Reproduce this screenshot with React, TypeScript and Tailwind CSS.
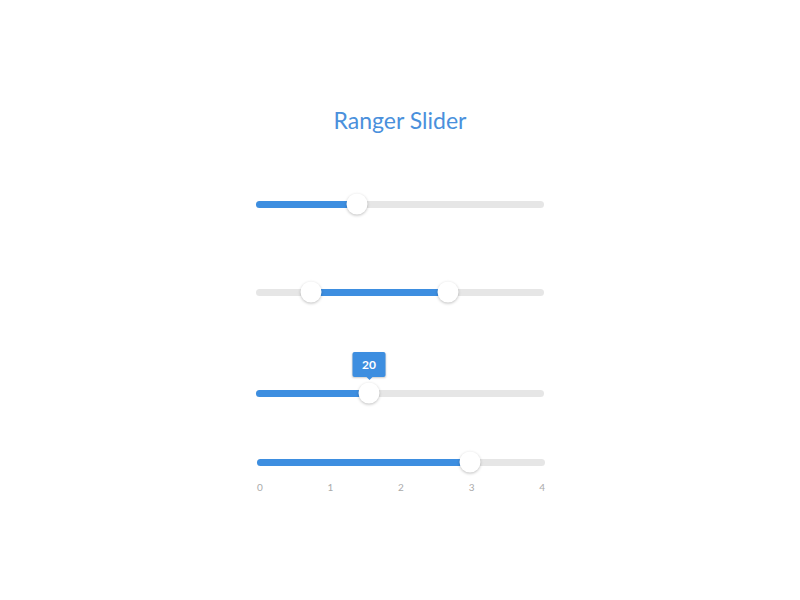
import React from "react";

const BLUE = "bg-[#3d8ee0]";

function Thumb({ left }: { left: number }) {
  return (
    <div
      className="absolute top-1/2 w-[21px] h-[21px] -translate-x-1/2 -translate-y-1/2 rounded-full bg-white shadow-[0_1px_3px_rgba(0,0,0,0.25)]"
      style={{ left: `${left}px` }}
    />
  );
}

function Slider({
  from,
  to,
  thumbs,
  children,
}: {
  from: number;
  to: number;
  thumbs: number[];
  children?: React.ReactNode;
}) {
  return (
    <div className="relative w-[288px] h-[20px] flex items-center">
      <div className="relative w-full h-[7px] rounded-full bg-[#e6e6e6]">
        <div
          className={`absolute top-0 h-full rounded-full ${BLUE}`}
          style={{ left: `${from}px`, width: `${to - from}px` }}
        />
      </div>
      {thumbs.map((t, i) => (
        <Thumb key={i} left={t} />
      ))}
      {children}
    </div>
  );
}

export default function App() {
  return (
    <div
      className="w-full h-[600px] bg-white flex flex-col items-center"
      style={{ fontFamily: "Lato, 'Noto Sans', sans-serif" }}
    >
      <h1 className="mt-[105px] text-[23px] leading-[30px] text-[#4a90dc]">
        Ranger Slider
      </h1>
      <div className="mt-[59px]">
        <Slider from={0} to={101} thumbs={[101]} />
      </div>
      <div className="mt-[68px]">
        <Slider from={55} to={192} thumbs={[55, 192]} />
      </div>
      <div className="mt-[81px]">
        <Slider from={0} to={113} thumbs={[113]}>
          <div className="absolute left-[113px] bottom-[26px] -translate-x-1/2">
            <div className="relative w-[33px] h-[25px] rounded-[2px] bg-[#3d8ee0] shadow-[0_1px_2px_rgba(0,0,0,0.2)] flex items-center justify-center text-white text-[12px] font-bold">
              20
              <div className="absolute left-1/2 -bottom-[3px] -translate-x-1/2 w-0 h-0 border-l-[3px] border-r-[3px] border-t-[3px] border-l-transparent border-r-transparent border-t-[#3d8ee0]" />
            </div>
          </div>
        </Slider>
      </div>
      <div className="mt-[49px] ml-[2px]">
        <Slider from={0} to={213} thumbs={[213]} />
        <div className="mt-[9px] flex justify-between text-[10px] leading-[12px] text-[#aaaaaa]">
          <span>0</span>
          <span>1</span>
          <span>2</span>
          <span>3</span>
          <span>4</span>
        </div>
      </div>
    </div>
  );
}
